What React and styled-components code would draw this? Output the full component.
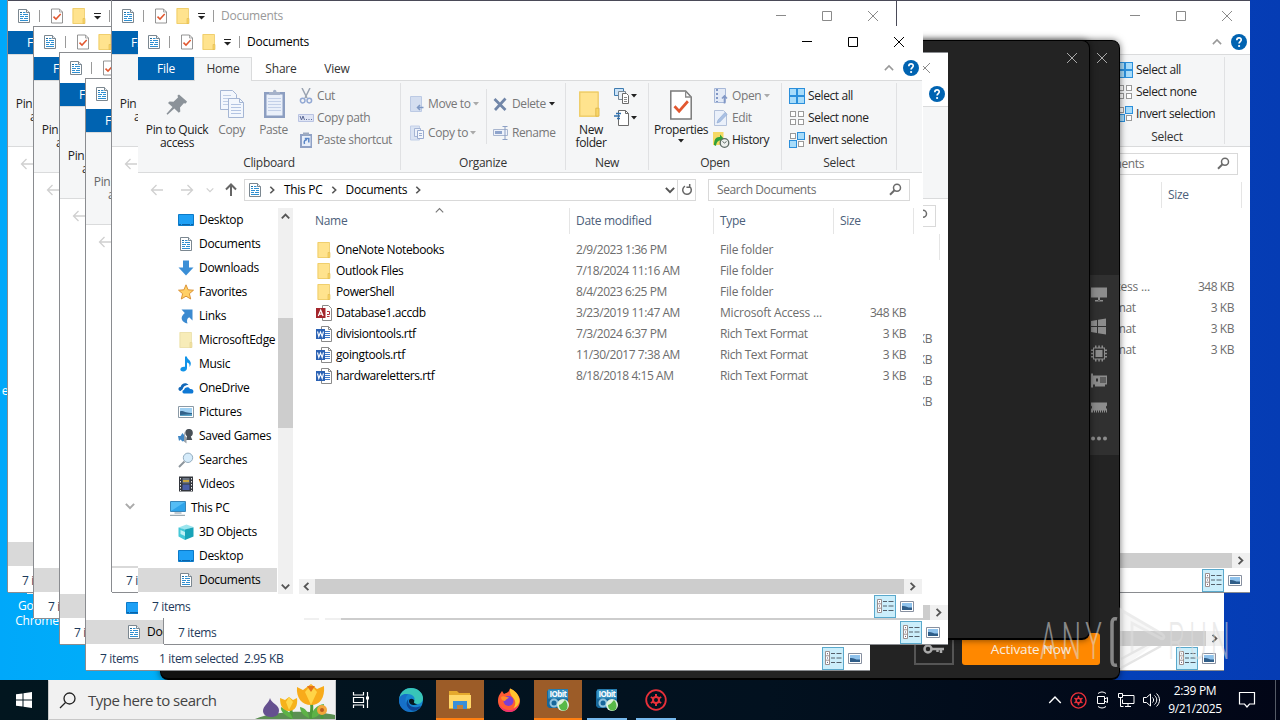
import React from "react";
import styled, { createGlobalStyle } from "styled-components";

const GlobalStyle = createGlobalStyle`
  * {
    box-sizing: border-box;
  }
  body {
    margin: 0;
    overflow: hidden;
    font-family: "Open Sans", "Noto Sans", sans-serif;
    font-size: 12px;
    letter-spacing: -0.4px;
    line-height: 16px;
    color: #000;
  }
  svg {
    display: block;
    flex: none;
  }
`;

/* ---------- icons ---------- */

const DocIcon = () => (
  <svg width="16" height="16" viewBox="0 0 16 16">
    <path d="M2.5 1.5h8l3 3v10h-11z" fill="#fff" stroke="#7b8790" />
    <path d="M10.5 1.5v3h3" fill="#e8eef2" stroke="#7b8790" />
    <path d="M7 4.5h2.5M4 6.5h2M7 6.5h5M4 8.5h4M9 8.5h3M4 10.5h3M8 10.5h4M4 12.5h8" stroke="#2f8fd0" />
    <path d="M4 4.5h2" stroke="#19699f" />
  </svg>
);

const CheckDocIcon = ({ w = 14, h = 16 }) => (
  <svg width={w} height={h} viewBox="0 0 14 16" preserveAspectRatio="none">
    <path d="M1.500 1h8l3 3v11h-11z" fill="#fff" stroke="#7a7a7a" strokeWidth=".8" />
    <path d="M9.500 1v3h3" fill="none" stroke="#8a8a8a" strokeWidth=".7" />
    <path d="M3.500 8.600l2.500 2.500 4.700-5" fill="none" stroke="#e2572f" strokeWidth="1.500" />
  </svg>
);

const FolderIcon = ({ size = 16, box = "0 0 16 16", pale }) => (
  <svg width={size} height={size} viewBox={box}>
    <path d="M1.500 0h12v16h-12z" fill={pale ? "#f7ecb8" : "#ffe38e"} />
    <path d="M13.500 10.500V.5H2v15h11" fill="none" stroke={pale ? "#eadfab" : "#ecca66"} strokeWidth=".8" />
    <path d="M12 10.500h2v5h-2z" fill={pale ? "#f3e4a5" : "#f8d568"} stroke={pale ? "#e2d08d" : "#e0b94c"} strokeWidth=".6" />
  </svg>
);

const DesktopIcon = () => (
  <svg width="16" height="16" viewBox="0 0 16 16">
    <path d="M.5 2.500h15v11H.5z" fill="#1ea0f5" stroke="#0c7ac8" />
    <path d="M1 12.500h14" stroke="#0a63a8" strokeDasharray="2 1 8 1" />
  </svg>
);

const DownloadIcon = () => (
  <svg width="16" height="16" viewBox="0 0 16 16">
    <path d="M5 .5h6v7h4.500L8 15.500.5 7.500H5z" fill="#3a8ed6" />
  </svg>
);

const StarIcon = () => (
  <svg width="16" height="16" viewBox="0 0 16 16">
    <path
      d="M8 .8l2.100 5 5.400.4-4.100 3.500 1.300 5.300L8 12.200 3.300 15l1.300-5.300L.5 6.200l5.400-.4z"
      fill="#ffd067"
      stroke="#d78b2c"
      strokeWidth=".9"
    />
  </svg>
);

const LinkIcon = () => (
  <svg width="16" height="16" viewBox="0 0 16 16">
    <path d="M3.500 1.500h11V12.500l-3.300-3.200C9 10.500 8.500 12.500 9.500 15.500 4 14.500 1 9.500 6.800 5z" fill="#3b8ad0" />
  </svg>
);

const MusicIcon = () => (
  <svg width="16" height="16" viewBox="0 0 16 16">
    <path d="M7 .5h1.800c.5 3 4 3.600 4 7 0 1.500-.6 2.600-1.300 3.500.5-3-.8-4-2.500-4.500V12c0 2-1.700 3.500-3.700 3.500S2 14.400 2.400 13c.5-1.800 2.800-2.700 4.600-2.200z" fill="#1193e8" />
  </svg>
);

const CloudIcon = () => (
  <svg width="16" height="16" viewBox="0 0 16 16">
    <path d="M2.500 11C-.5 10.500 0 6.800 2.800 6.800 3.200 3 8.500 1.800 10.500 5 8 4.800 5 6.500 4.800 9z" fill="#1268b8" />
    <path d="M6 13.500c-2-.2-2.200-3.200 0-3.500.3-3 5-4 6-1 4-.8 4.500 4.300 1.500 4.500z" fill="#0f78d4" />
  </svg>
);

const PictureIcon = () => (
  <svg width="16" height="16" viewBox="0 0 16 16">
    <path d="M.5 2.500h15v11H.5z" fill="#fff" stroke="#8b9aa6" />
    <path d="M2 4h12v8H2z" fill="#9fd0f2" />
    <path d="M2 12V7.500c3-1.500 5 2 12 1.500v3z" fill="#33628a" />
    <path d="M2 12v-1l12-1v2z" fill="#58a0c4" />
  </svg>
);

const GamesIcon = () => (
  <svg width="16" height="16" viewBox="0 0 16 16">
    <path d="M10.500 1c3.500 0 4.500 2 4.300 4.500-.1 1.600-1 2.500-2 3l1.500 3.500H8l1-4C6.500 7 6.500 1 10.500 1z" fill="#495057" />
    <path d="M8 2c-2 2-1.500 6 .5 7.500L8.500 15.500l-2.500-2V5z" fill="#9aa2a8" />
    <path d="M0 8h2.500l2-3 1.500 2v6l-1.500.5-2-2L1 13z" fill="#3f86c4" />
  </svg>
);

const SearchGlass = () => (
  <svg width="16" height="16" viewBox="0 0 16 16">
    <path d="M6.500 9.500l-5.500 5.500" stroke="#8d969d" strokeWidth="2" />
    <circle cx="10" cy="5.800" r="4.700" fill="#d5ebfa" stroke="#94adbf" />
  </svg>
);

const VideoIcon = () => (
  <svg width="16" height="16" viewBox="0 0 16 16">
    <path d="M1 .5h14v15H1z" fill="#33363d" />
    <path d="M4.500 2h7v5.500h-7z" fill="#6b7482" />
    <path d="M5 4h6v2H5z" fill="#c9a63e" />
    <path d="M4.500 8.500h7V14h-7z" fill="#4a5fa8" />
    <path d="M2.500 2v13M13.500 2v13" stroke="#e5e5e5" strokeDasharray="1.500 1.500" />
  </svg>
);

const PcIcon = () => (
  <svg width="18" height="16" viewBox="0 0 18 16">
    <path d="M1.500 1.500h15v10h-15z" fill="#55bdf5" stroke="#3a86b8" />
    <path d="M2 11L16 2v9z" fill="#2fa4ea" />
    <path d="M5.500 13h7M1 15.300h15" stroke="#8495a1" />
  </svg>
);

const CubeIcon = () => (
  <svg width="16" height="16" viewBox="0 0 16 16">
    <path d="M.5 3.500L8.500.5l7 2.500-8.500 3z" fill="#9be5ee" />
    <path d="M.5 3.500l6.500 2v10.500L.5 12.500z" fill="#45c8d8" />
    <path d="M7 5.500l8.500-2.200V12.500L7 16z" fill="#18a3b8" />
    <path d="M2.500 6l4.500 2v4l-4.500-2z" fill="#bff1f5" />
  </svg>
);

const AccessIcon = () => (
  <svg width="16" height="16" viewBox="0 0 16 16">
    <path d="M6.500.5h6l3 3v12h-9z" fill="#fff" stroke="#8a8a8a" />
    <path d="M11 6.500h2.500v3H11M11 11.500h2.500" fill="none" stroke="#b4333f" />
    <path d="M0 3h9.500v10H0z" fill="#a4262c" />
    <path d="M2.300 11L4.700 5l2.400 6M3.200 9.200h3" fill="none" stroke="#fff" strokeWidth="1.200" />
  </svg>
);

const WordIcon = () => (
  <svg width="16" height="16" viewBox="0 0 16 16">
    <path d="M5.500.5h7l3 3v12h-10z" fill="#fff" stroke="#8a8a8a" />
    <path d="M12.500.5v3h3" fill="none" stroke="#8a8a8a" />
    <path d="M9 5.500h5M9 7.500h5M9 9.500h5M9 11.500h5" stroke="#3e78c8" />
    <path d="M0 3h9v10H0z" fill="#2b62b4" />
    <path d="M1.500 5.500l1.300 5 1.700-4.500 1.700 4.500 1.300-5" fill="none" stroke="#fff" strokeWidth="1.100" />
  </svg>
);

const PinIcon = () => (
  <svg width="32" height="32" viewBox="0 0 32 32">
    <path
      d="M16.500 6.500l1.500-1 8 7-1.200 2-2-.3-3.800 4.300.3 4-1.500 1.300-4.500-4.300-6.800 6.200-1-1 6-6.700L7 14l1.500-1.500 4 .3 4.500-4.300z"
      fill="#8b9299"
    />
  </svg>
);

const CopyIcon = () => (
  <svg width="32" height="32" viewBox="0 0 32 32">
    <path d="M4.500 1.500h12l4 4v15h-16z" fill="#f3f7fd" stroke="#a5b6d4" />
    <path d="M7 6.500h8M7 9.500h10M7 12.500h10M7 15.500h10" stroke="#c0cee6" />
    <path d="M12.500 9.500h11l4 4v15h-15z" fill="#f3f7fd" stroke="#a5b6d4" />
    <path d="M23.500 9.500v4h4" fill="none" stroke="#a5b6d4" />
    <path d="M15 15.500h10M15 18.500h10M15 21.500h10M15 24.500h10" stroke="#b3c4e2" />
  </svg>
);

const PasteIcon = () => (
  <svg width="32" height="32" viewBox="0 0 32 32">
    <path d="M6 3h21v26H6z" fill="#8c9ec1" />
    <path d="M8.500 5.500h16v21h-16z" fill="#eaf0fa" />
    <path d="M10 9.500h13M10 12.500h13M10 15.500h13M10 18.500h13M10 21.500h13" stroke="#c3d0e8" />
    <path d="M11 6V3h4c0-3 3.500-3 3.500 0H22v3z" fill="#a5b2ca" />
  </svg>
);

const CutIcon = () => (
  <svg width="16" height="16" viewBox="0 0 16 16">
    <path d="M4 0l5 10M12 0L7 10" stroke="#9aa4b2" strokeWidth="1.500" />
    <circle cx="4.700" cy="12.600" r="2.300" fill="none" stroke="#93a9d4" strokeWidth="1.500" />
    <circle cx="11.300" cy="12.600" r="2.300" fill="none" stroke="#93a9d4" strokeWidth="1.500" />
  </svg>
);

const CopyPathIcon = () => (
  <svg width="16" height="16" viewBox="0 0 16 16">
    <path d="M.5 4.500h15v7H.5z" fill="#dfe5f5" stroke="#b9c3e2" />
    <path d="M2 6l1.500 4L5 6l1.500 4M8 9.500h1M10.500 9.500h1M13 9.500h1" fill="none" stroke="#5d6a97" />
  </svg>
);

const ShortcutIcon = () => (
  <svg width="16" height="16" viewBox="0 0 16 16">
    <path d="M2 2h12v14H2z" fill="#8fa1c5" />
    <path d="M4 4h8.500v10H4z" fill="#e8effa" />
    <path d="M5 .5h6v3H5z" fill="#9daac0" />
    <path d="M6.500 12c-1-3 .5-4 2.500-4.500M6.800 6.500h4v4" fill="none" stroke="#5a86c6" strokeWidth="1.500" />
  </svg>
);

const MoveIcon = () => (
  <svg width="16" height="16" viewBox="0 0 16 16">
    <path d="M.5 .5h11v15H.5z" fill="#d4def0" stroke="#bccae4" />
    <path d="M13.500 11.500H7.500M10 9l-2.500 2.500L10 14" fill="none" stroke="#7e98c4" strokeWidth="1.500" />
  </svg>
);

const CopyToIcon = () => (
  <svg width="16" height="16" viewBox="0 0 16 16">
    <path d="M.5 1h9v14h-9z" fill="#dae3f3" stroke="#c2cfe8" />
    <path d="M4.500 3.500h6v8h-6z" fill="#eef3fb" stroke="#a5b5d5" />
    <path d="M7.500 5.500h6v8h-6z" fill="#f4f7fc" stroke="#9aacd0" />
    <path d="M9 8.500h3M9 10.500h3" stroke="#9aacd0" />
  </svg>
);

const DeleteIcon = () => (
  <svg width="16" height="16" viewBox="0 0 16 16">
    <path d="M1.500 3l11 11M12.500 2.500L2 14" stroke="#7186a8" strokeWidth="2.700" />
  </svg>
);

const RenameIcon = () => (
  <svg width="16" height="16" viewBox="0 0 16 16">
    <path d="M.5 4.500h14v6H.5z" fill="#eef2fa" stroke="#a9b6cf" />
    <path d="M2 6h7v3H2z" fill="#8fa4cc" />
    <path d="M9.500 1.500h5M12 1.500v13M9.500 14.500h5" stroke="#8da0c4" />
  </svg>
);

const NewItemIcon = () => (
  <svg width="16" height="16" viewBox="0 0 16 16">
    <path d="M.5.500h9v7h-9z" fill="#cbe3f8" stroke="#3f7cb0" />
    <path d="M4.500 3.500h7v8h-7z" fill="#eef3f8" stroke="#7a8894" />
    <path d="M8.500 5.500h4l2 2v8h-6z" fill="#fff" stroke="#6b6b6b" />
    <path d="M10 9.500h3M10 11.500h3M10 13.500h3" stroke="#8a8a8a" />
  </svg>
);

const EasyAccessIcon = () => (
  <svg width="16" height="16" viewBox="0 0 16 16">
    <path d="M4.500.500h7l3 3v12h-10z" fill="#fff" stroke="#6b6b6b" />
    <path d="M11.500.5v3h3" fill="none" stroke="#6b6b6b" />
    <path d="M2 3.500h5M0 6h6M3 8.500h3" stroke="#2d6fae" strokeWidth="1.300" />
  </svg>
);

const OpenIcon = () => (
  <svg width="16" height="16" viewBox="0 0 16 16">
    <path d="M1.500.500h11v14h-11z" fill="#e3eaf6" stroke="#a7b8d8" />
    <path d="M4 1v13" stroke="#8298c6" strokeDasharray="2 2" strokeWidth="2" />
    <path d="M11.500 15.500V8M9 10.500L11.500 8l2.500 2.500" fill="none" stroke="#8298c6" strokeWidth="1.600" />
  </svg>
);

const EditIcon = () => (
  <svg width="16" height="16" viewBox="0 0 16 16">
    <path d="M1.500.500h9l3 3v12h-12z" fill="#eaf0fa" stroke="#b3c1da" />
    <path d="M4 13l1-3 7-7.500 2 2-7.200 7.500z" fill="#a9c0e4" stroke="#8fa7cf" strokeWidth=".6" />
  </svg>
);

const HistoryIcon = () => (
  <svg width="17" height="16" viewBox="0 0 17 16">
    <path d="M0 0h10.500v13H0z" fill="#f6d964" />
    <path d="M1 13c0-5.500 2-8.500 6-8V2.500L11 7l-3.500 4V8.500C5 8.500 3.500 10 3 14z" fill="#31a13a" />
    <circle cx="11.500" cy="11" r="4.300" fill="#edf0ee" stroke="#5d6a64" strokeWidth="1.300" />
    <path d="M9.500 9.500l2 1.500 2-1.500" fill="none" stroke="#5d6a64" />
  </svg>
);

const SelectIcon = ({ on = [0, 0, 0, 0] }) => (
  <svg width="16" height="16" viewBox="0 0 16 16">
    {on.map((lit, i) => {
      const col = i % 2;
      const row = i > 1 ? 1 : 0;
      return (
        <rect
          key={i}
          x={lit ? 0.5 + col * 8 : 1.5 + col * 8}
          y={lit ? 0.5 + row * 8 : 1.5 + row * 8}
          width={lit ? 7 : 5}
          height={lit ? 7 : 5}
          fill={lit ? "#a8dcfa" : "#fff"}
          stroke={lit ? "#2b8fdb" : "#9a9a9a"}
        />
      );
    })}
  </svg>
);

const turn = { down: 0, left: 90, up: 180, right: 270 };

const Arrow = ({ dir = "left", color = "#d0d0d0" }) => (
  <svg width="14" height="14" viewBox="0 0 14 14">
    <path
      d="M13 7H1.500M6.500 2L1.500 7l5 5"
      fill="none"
      stroke={color}
      strokeWidth={dir === "up" ? 2 : 1.300}
      transform={`rotate(${turn[dir] && turn[dir] - 90} 7 7)`}
    />
  </svg>
);

const Chevron = ({ dir = "down", color = "#555", w = 8, weight = 1.600 }) => (
  <svg width={w} height={w} viewBox="0 0 8 8">
    <path
      d="M.7 2.300L4 5.700l3.300-3.400"
      fill="none"
      stroke={color}
      strokeWidth={weight}
      transform={`rotate(${turn[dir]} 4 4)`}
    />
  </svg>
);

const Triangle = ({ color = "#222" }) => (
  <svg width="6" height="4" viewBox="0 0 6 4">
    <path d="M0 0h6L3 3.500z" fill={color} />
  </svg>
);

const QuickCaret = () => (
  <svg width="7" height="7" viewBox="0 0 7 7">
    <path d="M0 .5h7" stroke="#222" />
    <path d="M0 3h7L3.500 6.500z" fill="#222" />
  </svg>
);

const Magnifier = () => (
  <svg width="13" height="13" viewBox="0 0 13 13">
    <circle cx="8" cy="4.700" r="3.500" fill="none" stroke="#6b6b6b" strokeWidth="1.500" />
    <path d="M5.500 7.300L1 11.800" stroke="#6b6b6b" strokeWidth="2" />
  </svg>
);

const RefreshIcon = () => (
  <svg width="12" height="12" viewBox="0 0 12 12">
    <path d="M8.500 2.500a4.300 4.300 0 1 1-4.500-.3M8.700 0v3.200H5.400" fill="none" stroke="#666" strokeWidth="1.500" />
  </svg>
);

const HelpIcon = () => (
  <svg width="16" height="16" viewBox="0 0 16 16">
    <circle cx="8" cy="8" r="8" fill="#0063b1" />
    <path d="M5.800 6.200C5.900 3.200 10.400 3.300 10.200 6c-.1 1.500-2.100 1.700-2.100 3.500" fill="none" stroke="#fff" strokeWidth="1.700" />
    <circle cx="8.100" cy="12" r="1.100" fill="#fff" />
  </svg>
);

const CaptionIcon = ({ kind, color }) => (
  <svg width="12" height="12" viewBox="0 0 12 12">
    <path
      d={{ min: "M1 5.500h10", max: "M1.500 1.500h9v9h-9z", close: "M1 1l10 10M11 1L1 11" }[kind]}
      fill="none"
      stroke={color}
    />
  </svg>
);

const DetailsIcon = () => (
  <svg width="18" height="16" viewBox="0 0 18 16">
    <path d="M1.500 1.500h4v13h-4zM1.500 5.800h4M1.500 10.200h4" fill="#fff" stroke="#9c8f8f" />
    <path d="M3 3.700h1M3 8h1M3 12.400h1" stroke="#557" />
    <path d="M7 3.500h4M12.500 3.500h5M7 8h4M12.500 8h5M7 12.500h4M12.500 12.500h5" stroke="#55606b" />
  </svg>
);

const ThumbIcon = () => (
  <svg width="14" height="11" viewBox="0 0 14 11">
    <path d="M.5.5h13v10H.5z" fill="#fff" stroke="#8790a0" />
    <path d="M2 2h10v7H2z" fill="#8fc2ec" />
    <path d="M2 9V5c4-.5 5 2 10 1.500V9z" fill="#2f5d88" />
  </svg>
);

/* ---------- explorer window ---------- */

const TitleBar = styled.div`
  height: 30px;
  display: flex;
  align-items: center;
  padding-left: 8px;
  color: ${(p) => (p.$active ? "#000" : "#999")};
`;

const BarLine = styled.i`
  width: 1px;
  height: 12px;
  background: #9a9a9a;
  margin: ${(p) => p.$m};
`;

const QuickTools = styled.div`
  display: flex;
  align-items: center;
  gap: 7px;
`;

const WindowTitle = styled.span`
  letter-spacing: -0.25px;
`;

const Filler = styled.span`
  flex: 1;
`;

const Caption = styled.div`
  display: flex;
  gap: 34px;
  padding-right: 17px;
`;

const Tabs = styled.div`
  height: 24px;
  display: flex;
  border-bottom: 1px solid #dadbdc;
  color: #333;
  letter-spacing: -0.2px;
`;

const Tab = styled.div`
  width: ${(p) => p.$w}px;
  height: ${(p) => (p.$home ? 24 : 23)}px;
  text-align: center;
  line-height: 24px;
  ${(p) => p.$file && "background: #0063b1; color: #fff;"}
  ${(p) => p.$home && "background: #f5f6f7; border: 1px solid #dadbdc; border-bottom: 0; line-height: 22px;"}
`;

const TabTools = styled.div`
  margin-left: auto;
  padding: 0 3px 1px 0;
  display: flex;
  align-items: center;
  gap: 9px;
`;

const RibbonBar = styled.div`
  height: 92px;
  display: flex;
  background: #f5f6f7;
  border-bottom: 1px solid #dadbdc;
  color: ${(p) => (p.$dim ? "#666" : "#222")};
`;

const Group = styled.div`
  width: ${(p) => p.$w}px;
  height: 87px;
  margin-top: 2px;
  border-right: 1px solid #e0e1e3;
  display: flex;
  flex-direction: column;
`;

const GroupBody = styled.div`
  flex: none;
  height: 72px;
  display: flex;
  align-items: flex-start;
  padding-left: ${(p) => p.$pad}px;
`;

const GroupName = styled.div`
  text-align: center;
  color: #333;
  line-height: 15px;
  letter-spacing: -0.3px;
`;

const BigButton = styled.div`
  width: ${(p) => p.$w}px;
  display: flex;
  flex-direction: column;
  align-items: center;
  padding-top: 6px;
  line-height: 13px;
  text-align: center;
  white-space: pre;
  color: ${(p) => (p.$off ? "#777" : "inherit")};
  svg {
    margin-bottom: 2px;
  }
`;

const SmallStack = styled.div`
  width: ${(p) => (p.$w ? p.$w + "px" : "auto")};
  display: flex;
  flex-direction: column;
  gap: ${(p) => p.$gap || 6}px;
  padding-top: ${(p) => p.$top || 5}px;
  margin-left: ${(p) => p.$ml || 0}px;
`;

const SmallButton = styled.div`
  display: flex;
  align-items: center;
  gap: ${(p) => p.$gap ?? 3}px;
  height: 16px;
  line-height: 18px;
  white-space: nowrap;
  color: ${(p) => (p.$off ? "#777" : "inherit")};
`;

const Divider = styled.i`
  width: 1px;
  height: 55px;
  margin: 6px 6px 0 8px;
  background: #e0e1e3;
`;

const AddressRow = styled.div`
  height: 35px;
  display: flex;
  align-items: center;
  padding-bottom: 2px;
`;

const NavButtons = styled.div`
  width: 106px;
  padding-left: 12px;
  display: flex;
  align-items: center;
  svg:nth-child(2) {
    margin: 0 12px 0 16px;
  }
  svg:nth-child(4) {
    margin-left: 10px;
  }
`;

const AddressBox = styled.div`
  width: 452px;
  height: 22px;
  border: 1px solid #d9d9d9;
  display: flex;
  align-items: center;
  padding-left: 2px;
  letter-spacing: -0.3px;
`;

const Crumb = styled.span`
  margin: 0 7px 0 8px;
`;

const RefreshBox = styled.div`
  width: 18px;
  height: 20px;
  margin-left: 2px;
  border-left: 1px solid #d9d9d9;
  display: flex;
  align-items: center;
  justify-content: center;
`;

const SearchBox = styled.div`
  width: 202px;
  height: 22px;
  margin-left: 12px;
  padding: 0 7px 0 8px;
  border: 1px solid #d9d9d9;
  display: flex;
  align-items: center;
  justify-content: space-between;
  color: #6d6d6d;
`;

const Panes = styled.div`
  height: 386px;
  display: flex;
`;

const Tree = styled.div`
  width: 139px;
  overflow: hidden;
  padding-top: ${(p) => p.$shift}px;
  letter-spacing: -0.3px;
`;

const TreeRow = styled.div`
  height: 24px;
  padding-left: ${(p) => (p.$root ? 11 : 40)}px;
  display: flex;
  align-items: center;
  gap: ${(p) => (p.$root ? 4 : 5)}px;
  white-space: nowrap;
  background: ${(p) => (p.$selected ? "#d9d9d9" : "none")};
`;

const TwistySlot = styled.span`
  width: 16px;
  display: flex;
  padding-left: 2px;
`;

const VScroll = styled.div`
  width: 15px;
  margin: 0 6px 0 1px;
  background: #f0f0f0;
  display: flex;
  flex-direction: column;
  align-items: center;
  padding: 4px 0 3px;
`;

const VThumb = styled.div`
  width: 15px;
  height: 110px;
  margin: 97px 0 auto;
  background: #cdcdcd;
`;

const Details = styled.div`
  width: 623px;
  display: flex;
  flex-direction: column;
`;

const HeaderRow = styled.div`
  position: relative;
  height: 26px;
  margin-bottom: 5px;
  display: flex;
  line-height: 26px;
  color: #4c607a;
  letter-spacing: -0.3px;
`;

const HeaderCell = styled.div`
  width: ${(p) => p.$w}px;
  padding-left: ${(p) => p.$pad || 6}px;
  border-right: 1px solid #e5e5e5;
`;

const SortMark = styled.div`
  position: absolute;
  left: 136px;
  top: -2px;
`;

const FileRow = styled.div`
  height: 21px;
  display: flex;
  align-items: center;
  padding-left: 17px;
  color: #6d6d6d;
  white-space: nowrap;
`;

const FileName = styled.div`
  width: 260px;
  display: flex;
  align-items: center;
  gap: 4px;
  color: #000;
`;

const Cell = styled.div`
  width: ${(p) => p.$w}px;
  text-align: ${(p) => (p.$right ? "right" : "left")};
  letter-spacing: ${(p) => p.$track || -0.45}px;
`;

const HScroll = styled.div`
  height: 15px;
  margin-top: auto;
  display: flex;
  align-items: center;
  background: #f0f0f0;
  padding: 0 5px 0 3px;
  justify-content: space-between;
`;

const HThumb = styled.div`
  width: 589px;
  height: 15px;
  background: #cdcdcd;
`;

const StatusBar = styled.div`
  height: 24px;
  display: flex;
  align-items: center;
  padding-left: 14px;
  color: #1e395b;
  white-space: nowrap;
  letter-spacing: -0.35px;
`;

const StatusText = styled.span`
  width: ${(p) => p.$w}px;
  padding-top: 2px;
`;

const ViewSwitch = styled.div`
  margin-left: auto;
  display: flex;
  align-items: center;
  gap: 4px;
  padding-right: 8px;
`;

const ActiveView = styled.div`
  width: 22px;
  height: 23px;
  border: 1px solid #5aa9cc;
  background: #cbeefb;
  display: flex;
  align-items: center;
  justify-content: center;
`;

// Windows lower in the stack only paint the side that sticks out.
const peek = {
  left: `
    ${Group}:not(:first-child), ${AddressBox}, ${SearchBox}, ${VScroll}, ${Details} {
      visibility: hidden;
    }
    ${Tab}:not(:first-child) {
      visibility: hidden;
    }
  `,
  right: `
    ${Group}:not(:last-child), ${Tab}, ${AddressBox}, ${Tree}, ${FileName}, ${WindowTitle} {
      visibility: hidden;
    }
  `,
};

const Frame = styled.div`
  position: absolute;
  left: ${(p) => p.$x}px;
  top: ${(p) => p.$y}px;
  width: 784px;
  height: 592px;
  display: flex;
  flex-direction: column;
  background: #fff;
  box-shadow: ${(p) =>
    p.$plain
      ? "1px 0 0 #fff"
      : `-1px 0 0 #8a8c90, 0 1px 0 #8a8c90, 1px 0 0 ${p.$rightEdge ? "#4a4a58" : "transparent"}`};
  border-top: 1px solid ${(p) => (p.$plain ? "#fff" : p.$y === 0 ? "#4a4a58" : "#8a8c90")};
  ${(p) => peek[p.$peek]}
`;

const tree = [
  ["Desktop", DesktopIcon],
  ["Documents", DocIcon],
  ["Downloads", DownloadIcon],
  ["Favorites", StarIcon],
  ["Links", LinkIcon],
  ["MicrosoftEdge", () => <FolderIcon pale />],
  ["Music", MusicIcon],
  ["OneDrive", CloudIcon],
  ["Pictures", PictureIcon],
  ["Saved Games", GamesIcon],
  ["Searches", SearchGlass],
  ["Videos", VideoIcon],
  ["This PC", PcIcon],
  ["3D Objects", CubeIcon],
  ["Desktop", DesktopIcon],
  ["Documents", DocIcon],
];

const files = [
  ["OneNote Notebooks", "2/9/2023 1:36 PM", "File folder", "", FolderIcon],
  ["Outlook Files", "7/18/2024 11:16 AM", "File folder", "", FolderIcon],
  ["PowerShell", "8/4/2023 6:25 PM", "File folder", "", FolderIcon],
  ["Database1.accdb", "3/23/2019 11:47 AM", "Microsoft Access ...", "348 KB", AccessIcon],
  ["divisiontools.rtf", "7/3/2024 6:37 PM", "Rich Text Format", "3 KB", WordIcon],
  ["goingtools.rtf", "11/30/2017 7:38 AM", "Rich Text Format", "3 KB", WordIcon],
  ["hardwareletters.rtf", "8/18/2018 4:15 AM", "Rich Text Format", "3 KB", WordIcon],
];

function Ribbon({ dim }) {
  return (
    <RibbonBar $dim={dim}>
      <Group $w={263}>
        <GroupBody $pad={5}>
          <BigButton $w={68}>
            <PinIcon />
            {"Pin to Quick\naccess"}
          </BigButton>
          <BigButton $w={41} $off>
            <CopyIcon />
            Copy
          </BigButton>
          <BigButton $w={43} $off>
            <PasteIcon />
            Paste
          </BigButton>
          <SmallStack $ml={3}>
            <SmallButton $off><CutIcon />Cut</SmallButton>
            <SmallButton $off><CopyPathIcon />Copy path</SmallButton>
            <SmallButton $off><ShortcutIcon />Paste shortcut</SmallButton>
          </SmallStack>
        </GroupBody>
        <GroupName>Clipboard</GroupName>
      </Group>
      <Group $w={165}>
        <GroupBody $pad={9}>
          <SmallStack $w={68} $gap={13} $top={13}>
            <SmallButton $off $gap={2}><MoveIcon />Move to <Triangle color="#aaa" /></SmallButton>
            <SmallButton $off $gap={2}><CopyToIcon />Copy to <Triangle color="#aaa" /></SmallButton>
          </SmallStack>
          <Divider />
          <SmallStack $gap={13} $top={13}>
            <SmallButton $off><DeleteIcon />Delete <Triangle /></SmallButton>
            <SmallButton $off><RenameIcon />Rename</SmallButton>
          </SmallStack>
        </GroupBody>
        <GroupName>Organize</GroupName>
      </Group>
      <Group $w={83}>
        <GroupBody $pad={4}>
          <BigButton $w={42}>
            <FolderIcon size={32} box="-1 -1.500 20 20" />
            {"New\nfolder"}
          </BigButton>
          <SmallStack $ml={2}>
            <SmallButton $gap={1}><NewItemIcon /><Triangle /></SmallButton>
            <SmallButton $gap={1}><EasyAccessIcon /><Triangle /></SmallButton>
          </SmallStack>
        </GroupBody>
        <GroupName>New</GroupName>
      </Group>
      <Group $w={133}>
        <GroupBody $pad={4}>
          <BigButton $w={56}>
            <CheckDocIcon w={26} h={32} />
            Properties
            <Filler style={{ minHeight: 3 }} />
            <Triangle />
          </BigButton>
          <SmallStack $ml={4}>
            <SmallButton $off><OpenIcon />Open <Triangle color="#aaa" /></SmallButton>
            <SmallButton $off><EditIcon />Edit</SmallButton>
            <SmallButton $gap={2}><HistoryIcon />History</SmallButton>
          </SmallStack>
        </GroupBody>
        <GroupName>Open</GroupName>
      </Group>
      <Group $w={115}>
        <GroupBody $pad={7}>
          <SmallStack>
            <SmallButton><SelectIcon on={[1, 1, 1, 1]} />Select all</SmallButton>
            <SmallButton><SelectIcon />Select none</SmallButton>
            <SmallButton><SelectIcon on={[0, 1, 1, 0]} />Invert selection</SmallButton>
          </SmallStack>
        </GroupBody>
        <GroupName>Select</GroupName>
      </Group>
    </RibbonBar>
  );
}

function Explorer({ x, y, active, dim, shift = 0, chevron, plain, rightEdge, side, titled, selection, noCount }) {
  const ink = active ? "#000" : "#8a8a8a";
  return (
    <Frame $x={x} $y={y} $plain={plain} $rightEdge={rightEdge} $peek={side}>
      <TitleBar $active={active}>
        <DocIcon />
        <BarLine $m="0 10px 0 7px" />
        <QuickTools>
          <CheckDocIcon />
          <FolderIcon />
          <QuickCaret />
        </QuickTools>
        <BarLine $m="0 7px 0 8px" />
        {titled && <WindowTitle>Documents</WindowTitle>}
        <Filler />
        <Caption>
          <CaptionIcon kind="min" color={ink} />
          <CaptionIcon kind="max" color={ink} />
          <CaptionIcon kind="close" color={ink} />
        </Caption>
      </TitleBar>
      <Tabs>
        <Tab $w={56} $file>File</Tab>
        <Tab $w={58} $home>Home</Tab>
        <Tab $w={58}>Share</Tab>
        <Tab $w={54}>View</Tab>
        <TabTools>
          <Chevron dir="up" color="#999" w={10} weight={1.200} />
          <HelpIcon />
        </TabTools>
      </Tabs>
      <Ribbon dim={dim} />
      <AddressRow>
        <NavButtons>
          <Arrow />
          <Arrow dir="right" />
          <Chevron color="#d0d0d0" weight={1.200} />
          <Arrow dir="up" color="#666" />
        </NavButtons>
        <AddressBox>
          <DocIcon />
          <Filler style={{ maxWidth: 5 }} />
          <Chevron dir="right" />
          <Crumb>This PC</Crumb>
          <Chevron dir="right" />
          <Crumb>Documents</Crumb>
          <Chevron dir="right" />
          <Filler />
          <Chevron w={10} />
          <RefreshBox>
            <RefreshIcon />
          </RefreshBox>
        </AddressBox>
        <SearchBox>
          Search Documents
          <Magnifier />
        </SearchBox>
      </AddressRow>
      <Panes>
        <Tree $shift={shift}>
          {tree.map(([label, Icon], i) => {
            const root = label === "This PC";
            const last = i === tree.length - 1;
            return (
              <TreeRow key={i} $root={root} $selected={last}>
                {root && <TwistySlot>{chevron && <Chevron w={10} color="#aaa" />}</TwistySlot>}
                <Icon />
                {(!side || (last && !shift)) && label}
              </TreeRow>
            );
          })}
        </Tree>
        <VScroll>
          <Chevron dir="up" w={9} />
          <VThumb />
          <Chevron w={9} />
        </VScroll>
        <Details>
          <HeaderRow>
            <HeaderCell $w={271} $pad={16}>{!side && "Name"}</HeaderCell>
            <HeaderCell $w={144}>{!side && "Date modified"}</HeaderCell>
            <HeaderCell $w={120}>{!side && "Type"}</HeaderCell>
            <HeaderCell $w={80}>Size</HeaderCell>
            <SortMark>
              <Chevron dir="up" color="#777" w={9} weight={1} />
            </SortMark>
          </HeaderRow>
          {files.map(([name, date, type, size, Icon]) => (
            <FileRow key={name}>
              <FileName>
                <Icon />
                {name}
              </FileName>
              <Cell $w={144}>{!side && date}</Cell>
              <Cell $w={120} $track={type[0] === "R" ? -0.4 : -0.2}>{type}</Cell>
              <Cell $w={66} $right>{size}</Cell>
            </FileRow>
          ))}
          <HScroll>
            <Chevron dir="left" w={9} />
            <HThumb />
            <Chevron dir="right" w={9} />
          </HScroll>
        </Details>
      </Panes>
      <StatusBar>
        {!noCount && <StatusText $w={59}>7 items</StatusText>}
        {selection && (
          <>
            <StatusText $w={85}>1 item selected</StatusText>
            <StatusText $w={50}>2.95 KB</StatusText>
          </>
        )}
        <ViewSwitch>
          <ActiveView>
            <DetailsIcon />
          </ActiveView>
          <ThumbIcon />
        </ViewSwitch>
      </StatusBar>
    </Frame>
  );
}

/* ---------- dark app windows ---------- */

const DarkWindow = styled.div`
  position: absolute;
  left: 160px;
  top: 40px;
  width: ${(p) => p.$w}px;
  height: ${(p) => p.$h}px;
  border: 1px solid #000;
  border-width: 1px 1px 2px 1px;
  border-radius: 8px;
  background: linear-gradient(90deg, #111 139px, #232323 139px);
  box-shadow: 0 0 7px rgba(0, 0, 0, 0.55);
  display: flex;
  flex-direction: column;
  align-items: flex-end;
`;

const DarkClose = styled.div`
  padding: 11px 11px 0;
`;

const SideStrip = styled.div`
  width: 30px;
  height: 180px;
  margin: 211px 0 auto;
  padding: 11px 0 0 2px;
  background: #303030;
  display: flex;
  flex-direction: column;
  gap: 10px;
  svg:first-child {
    margin-bottom: 5px;
  }
  svg:last-child {
    margin-top: 4px;
  }
`;

const Actions = styled.div`
  display: flex;
  gap: 8px;
  padding: 0 19px 13px 0;
`;

const KeyButton = styled.div`
  width: 40px;
  height: 32px;
  border: 2px solid #555;
  display: flex;
  align-items: center;
  justify-content: center;
`;

const ActivateButton = styled.div`
  width: 138px;
  height: 32px;
  border-radius: 3px;
  background: #ff8800;
  color: #f8ede0;
  font-size: 13.500px;
  letter-spacing: -0.150px;
  text-align: center;
  line-height: 33px;
`;

const sideIcons = [
  "M0 1h16v10H0zM7 11h2v3H7zM4 13.500h8v1.500H4z",
  "M0 2.500l6-1v6H0zM7 1.300L15 0v7.500H7zM0 8.500h6v6l-6-1zM7 8.500h8V16l-8-1.300z",
  "M4.500 4.500h7v7h-7zM2 2h12v12H2zM3 3v10h10V3zM4 0h1.500v2H4zM7.300 0h1.500v2H7.300zM10.500 0H12v2h-1.500zM4 14h1.500v2H4zM7.300 14h1.500v2H7.300zM10.500 14H12v2h-1.500zM0 4h2v1.500H0zM0 7.300h2v1.500H0zM0 10.500h2V12H0zM14 4h2v1.500h-2zM14 7.300h2v1.500h-2zM14 10.500h2V12h-2z",
  "M0 1h2v14H0zM2 3h14v9h-2v2H4v-2H2zM9 5v1h6V5zM9 7v1h6V7zM9 9v1h6V9zM5 6v3h2V6z",
  "M0 3h16v3l-1 1v2h1v4h-1v-2h-1v2h-1v-2h-1v2h-1v-2h-1v2H9v-2H8v2H7v-2H6v2H5v-2H4v2H3v-2H2v2H0V9h1V7L0 6z",
  "M0 8a2 2 0 1 0 4 0 2 2 0 1 0-4 0M6 8a2 2 0 1 0 4 0 2 2 0 1 0-4 0M12 8a2 2 0 1 0 4 0 2 2 0 1 0-4 0",
];

/* ---------- desktop ---------- */

const Desktop = styled.div`
  position: relative;
  width: 1280px;
  height: 720px;
  overflow: hidden;
  background: linear-gradient(90deg, #00a8fa 0, #00b2f8 200px, #0440b8 1130px, #053cb4 1280px);
`;

const DesktopLabel = styled.div`
  position: absolute;
  left: ${(p) => p.$x}px;
  top: ${(p) => p.$y}px;
  width: 74px;
  text-align: center;
  line-height: 15px;
  letter-spacing: -0.250px;
  color: #fff;
  display: flex;
  flex-direction: column;
  align-items: center;
`;

const Watermark = styled.svg`
  position: absolute;
  left: 1036px;
  top: 602px;
  opacity: 0.55;
`;

const Taskbar = styled.div`
  position: absolute;
  left: 0;
  top: 680px;
  width: 1280px;
  height: 40px;
  display: flex;
  background: linear-gradient(90deg, #02161f, #02111f 60%, #020617);
  color: #fff;
`;

const StartButton = styled.div`
  width: 48px;
  display: flex;
  align-items: center;
  justify-content: center;
`;

const TaskSearch = styled.div`
  width: 288px;
  background: #f1f1f1;
  border: 1px solid #c8c8c8;
  border-top-color: #f1f1f1;
  display: flex;
  align-items: center;
  padding-left: 10px;
  gap: 12px;
  font-size: 15px;
  letter-spacing: -0.5px;
  color: #444;
  white-space: nowrap;
  svg:last-child {
    margin-left: auto;
  }
`;

const TaskItem = styled.div`
  width: ${(p) => p.$w || 48}px;
  margin-right: ${(p) => p.$mr || 0}px;
  display: flex;
  align-items: center;
  justify-content: center;
  background: ${(p) => (p.$hot ? "#9c5c28" : "none")};
  border-bottom: 2px solid ${(p) => (p.$hot ? "#ff7f11" : p.$open ? "#76b9ed" : "transparent")};
  padding-top: 2px;
`;

const Tray = styled.div`
  margin-left: auto;
  display: flex;
  align-items: center;
  gap: 8px;
`;

const Clock = styled.div`
  width: 54px;
  margin-right: 1px;
  line-height: 18px;
  letter-spacing: -0.350px;
  text-align: center;
`;

const ShowDesktop = styled.i`
  width: 5px;
  height: 40px;
  margin-left: 4px;
  border-left: 1px solid #555b66;
`;

const Flowers = () => (
  <svg width="80" height="38" viewBox="0 0 80 38">
    <path d="M0 38c20-9 60-9 80-4v4z" fill="#5b8f52" />
    <path d="M36 38c1-8 0-10-3-14M56 38c0-8 2-12 0-18M67 38v-6" stroke="#4c9a3a" strokeWidth="3" fill="none" />
    <path d="M38 38c-8-3-13-8-12-12 6 3 10 6 12 12zM57 37c-1-8 5-13 12-14 0 7-5 13-12 14zM54 37c-6-2-9-7-9-11 5 1 9 5 9 11z" fill="#5db247" />
    <path d="M25 17l5 2 4-3 4 3 4-2c1 8-2 13-8 13s-9-5-9-13z" fill="#f6b21b" />
    <path d="M34 16l4 5-4 8-3-8z" fill="#ffd84c" />
    <path d="M42 6l6 3 8-6 6 5 7-3c1 12-4 19-13 19S41 17 42 6z" fill="#f8ab1a" />
    <path d="M56 4l6 7-6 13-6-13z" fill="#ffd447" />
    <path d="M52 5l4 6 4-6z" fill="#e5741a" />
    <path d="M15 17c1 5 9 7 9 12 0 5-3 7-8 7s-8-3-8-6c0-5 6-8 7-13z" fill="#65508f" />
    <circle cx="67" cy="29" r="5" fill="#f3a63b" />
    <circle cx="67" cy="29" r="2" fill="#b95d20" />
  </svg>
);

const EdgeIcon = () => (
  <svg width="24" height="24" viewBox="0 0 24 24">
    <circle cx="12" cy="12" r="12" fill="#1685d0" />
    <path d="M.3 10C2 3 7 0 12 0c7 0 12 5 12 10 0 4-3 6-6 6-2.500 0-4-1-3-2.500C17 10 14 6 9 6c-4 0-7 1.500-8.700 4z" fill="#38c5b8" />
    <path d="M0 12c.5-5 6-7 9-5.500C5 9 5 20 14 22.500 6 26 0 19 0 12z" fill="#1670c8" />
    <path d="M9.500 11c-2 5 3 11 12.500 7-2 4-6 5.500-9 4.500C7 20 6 14 9.500 11z" fill="#0d4595" />
    <path d="M10 13c0-2.500 4-3.500 5.500 0-1.500 1.500 0 3 3 3-3 2-8.500 1-8.500-3z" fill="#06171f" />
  </svg>
);

const ExplorerTaskIcon = () => (
  <svg width="24" height="20" viewBox="0 0 24 20">
    <path d="M1 1h8l2 2h11v16H1z" fill="#e5a92d" />
    <path d="M1 5h22v13H1z" fill="#ffd768" />
    <path d="M5 11h14v8h-4v-4H9v4H5z" fill="#3a8fd8" />
    <path d="M9 15h6v4H9z" fill="#c2803a" />
  </svg>
);

const FirefoxIcon = () => (
  <svg width="24" height="24" viewBox="0 0 24 24">
    <path d="M3 6l2-3 2 3c2-1 4-1.500 5-3l1-2.500C16 2 19 4 20 6c2 2 3 4 3 7a11 11 0 0 1-22 0c0-3 .5-5 2-7z" fill="#ff5b35" />
    <path d="M13 .5C17 2 22 6 22.500 12c0 3-2 7-6 8 3-4 2-8-1-11-2-2-3-5-2.500-8.500z" fill="#ffc52e" />
    <path d="M2 17c4 5 13 8 19 1-1 4-5 6-9 6S3 21 2 17z" fill="#ef3070" />
    <circle cx="11.500" cy="13" r="5" fill="#7a3fd4" />
    <path d="M4 9c3-2 5 1 8 0-1 2-3 2-4 4-2 0-4-1-4-4z" fill="#ff8e2b" />
  </svg>
);

const IobitIcon = () => (
  <svg width="24" height="24" viewBox="0 0 24 24">
    <path d="M1 3l3-2h18v16l-2 3H3l-2-2z" fill="#16679a" />
    <path d="M2 1.500h20v9H2z" fill="#3590c0" />
    <text x="3.500" y="9" fontFamily="Open Sans" fontSize="8" fontWeight="700" fill="#fff" textLength="17">IObit</text>
    <circle cx="8" cy="15" r="3.500" fill="none" stroke="#8fc3de" strokeWidth="2" />
    <circle cx="17" cy="17" r="6" fill="#dff2dc" />
    <path d="M13 17c3-.5 4-3 6-5 4 4 3 11-1 10.500-3 0-5-2-5-5.500z" fill="#58b947" />
  </svg>
);

const RedGear = ({ size = 22 }) => (
  <svg width={size} height={size} viewBox="0 0 22 22">
    <circle cx="11" cy="11" r="9.800" fill="none" stroke="#e8303a" strokeWidth="1.800" />
    <circle cx="11" cy="11" r="3" fill="none" stroke="#e8303a" strokeWidth="2" />
    <path d="M11 5v3M11 14v3M5.800 8l2.600 1.500M13.600 12.500l2.600 1.500M5.800 14l2.600-1.500M13.600 9.500L16.200 8" stroke="#e8303a" strokeWidth="2" />
  </svg>
);

function App() {
  return (
    <Desktop>
      <GlobalStyle />
      <DesktopLabel $x={-32} $y={383}>e</DesktopLabel>
      <DesktopLabel $x={0} $y={572}>
        <svg width="48" height="26" viewBox="0 0 48 26">
          <path d="M14 18h12v4H14z" fill="#f2f2f2" />
          <path d="M26 18h12v4H26z" fill="#2a9a4e" />
        </svg>
        Google Chrome
      </DesktopLabel>

      <Explorer x={440} y={78} side="right" noCount />
      <Explorer x={466} y={0} side="right" noCount />
      <Explorer x={8} y={0} side="left" />
      <Explorer x={34} y={26} side="left" />
      <Explorer x={60} y={52} side="left" />

      <DarkWindow $w={960} $h={640}>
        <DarkClose>
          <CaptionIcon kind="close" color="#aaa" />
        </DarkClose>
        <SideStrip>
          {sideIcons.map((d) => (
            <svg key={d} width="16" height="17" viewBox="0 0 16 16">
              <path d={d} fill="#8c8c8c" fillRule="evenodd" />
            </svg>
          ))}
        </SideStrip>
        <Actions>
          <KeyButton>
            <svg width="22" height="12" viewBox="0 0 22 12">
              <circle cx="5" cy="6" r="3.500" fill="none" stroke="#aaa" strokeWidth="2.500" />
              <path d="M8 6h13M18 6v4M14.500 6v3" stroke="#aaa" strokeWidth="2.500" />
            </svg>
          </KeyButton>
          <ActivateButton>Activate Now</ActivateButton>
        </Actions>
      </DarkWindow>
      <DarkWindow $w={930} $h={600}>
        <DarkClose>
          <CaptionIcon kind="close" color="#aaa" />
        </DarkClose>
      </DarkWindow>

      <Explorer x={86} y={78} side="left" dim selection />
      <Explorer x={112} y={0} side="left" titled shift={24} chevron rightEdge />
      <Explorer x={164} y={52} side="right" />
      <Explorer x={138} y={26} titled active plain />

      <Watermark width="200" height="74" viewBox="0 0 200 74">
        <g fill="#dcdcdc" fontFamily="Roboto" fontSize="51" fontWeight="300" letterSpacing="8">
          <text x="4" y="57" textLength="66" lengthAdjust="spacingAndGlyphs">ANY</text>
          <text x="132" y="57" textLength="66" lengthAdjust="spacingAndGlyphs">RUN</text>
        </g>
        <path d="M81 17c-4-1-5 1-5 5v36c0 4 1 6 5 5" fill="none" stroke="#dcdcdc" strokeWidth="3.500" />
        <path d="M85 8l42 27-42 32z" fill="#cfcfcf" opacity=".3" />
        <path d="M85 66V8l41 24c4 3 1 6-2 4L96 21v30" fill="none" stroke="#dedede" strokeWidth="2.800" />
        <path d="M85 66l40-22M85 57l26-14" stroke="#d0d0d0" strokeWidth="2.500" />
      </Watermark>

      <Taskbar>
        <StartButton>
          <svg width="16" height="16" viewBox="0 0 16 16">
            <path d="M0 2.300L6.500 1.400v6.100H0zM7.500 1.200L16 0v7.500H7.500zM0 8.500h6.500v6.100L0 13.700zM7.500 8.500H16V16l-8.500-1.200z" fill="#fff" />
          </svg>
        </StartButton>
        <TaskSearch>
          <svg width="17" height="17" viewBox="0 0 17 17">
            <circle cx="10.500" cy="6.500" r="5.500" fill="none" stroke="#222" strokeWidth="1.300" />
            <path d="M6.500 10.500L1 16" stroke="#222" strokeWidth="1.300" />
          </svg>
          Type here to search
          <Flowers />
        </TaskSearch>
        <TaskItem $w={50}>
          <svg width="18" height="16" viewBox="0 0 18 16">
            <path d="M1.500 0v3h10V0M1.500 16v-3h10v3M1.500 5.500h10v5h-10zM15.500 0v16" fill="none" stroke="#fff" strokeWidth="1.200" />
            <path d="M14 4.500h3v3h-3z" fill="#fff" />
          </svg>
        </TaskItem>
        <TaskItem $w={50}><EdgeIcon /></TaskItem>
        <TaskItem $hot><ExplorerTaskIcon /></TaskItem>
        <TaskItem $w={50}><FirefoxIcon /></TaskItem>
        <TaskItem $hot $mr={5}><IobitIcon /></TaskItem>
        <TaskItem $w={40} $mr={9} $open><IobitIcon /></TaskItem>
        <TaskItem $w={40} $open><RedGear /></TaskItem>
        <Tray>
          <Chevron dir="up" w={14} color="#fff" weight={0.800} />
          <RedGear size={17} />
          <svg width="15" height="18" viewBox="1 0 15 18">
            <path d="M3.500 5.500h7v7h-7zM10.500 8l3-1.500v5l-3-1.500M4 2.500c3-2 5-2 8 0M4 15.500c3 2 5 2 8 0" fill="none" stroke="#fff" />
          </svg>
          <svg width="17" height="15" viewBox="0 0 17 15">
            <path d="M5 2.500h11v8H4.500v-4M.5.500h4v4h-4zM2.500 4.500v9h3M10 10.500v3M7 13.500h6" fill="none" stroke="#fff" />
          </svg>
          <svg width="17" height="16" viewBox="0 0 17 16">
            <path d="M.5 5.500h3l4-3.500v12l-4-3.500h-3zM9.500 5.500c1.500 1.500 1.500 3.500 0 5M11.500 3.500c3 2.500 3 6.500 0 9M13.500 1.500c4 4 4 9 0 13" fill="none" stroke="#fff" />
          </svg>
          <Clock>
            2:39 PM
            <br />
            9/21/2025
          </Clock>
          <svg width="32" height="16" viewBox="0 0 32 16">
            <path d="M8.500.500h15v11.500h-5l-2.500 3-2.500-3h-5z" fill="none" stroke="#fff" strokeWidth="1.200" />
          </svg>
          <ShowDesktop />
        </Tray>
      </Taskbar>
    </Desktop>
  );
}

export default App;
